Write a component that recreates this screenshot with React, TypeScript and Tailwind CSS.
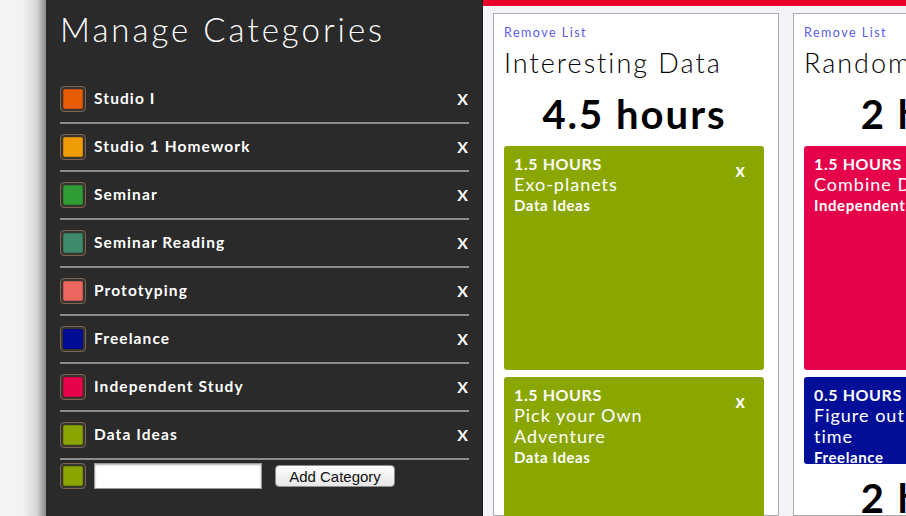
import React from 'react';

interface Category {
  name: string;
  color: string;
}

interface Task {
  hours: string;
  title: React.ReactNode;
  category: string;
  color: string;
  height: string;
  showX?: boolean;
}

const categories: Category[] = [
  { name: 'Studio I', color: 'bg-[#e85c05]' },
  { name: 'Studio 1 Homework', color: 'bg-[#ef9c05]' },
  { name: 'Seminar', color: 'bg-[#2f9c35]' },
  { name: 'Seminar Reading', color: 'bg-[#3d8a6c]' },
  { name: 'Prototyping', color: 'bg-[#ec6660]' },
  { name: 'Freelance', color: 'bg-[#020c94]' },
  { name: 'Independent Study', color: 'bg-[#e5024b]' },
  { name: 'Data Ideas', color: 'bg-[#8aa400]' },
];

const Swatch = ({ color }: { color: string }) => (
  <div className="w-[26px] h-[26px] shrink-0 rounded-[4px] border border-[#7a6550] bg-[#3a3430] p-[2px]">
    <div className={`w-full h-full rounded-[2px] ${color} shadow-[inset_0_0_0_1px_rgba(0,0,0,0.15)]`} />
  </div>
);

const TaskCard = ({ task }: { task: Task }) => (
  <div className={`${task.color} ${task.height} w-[260px] shrink-0 rounded-[3px] overflow-hidden pl-[10px] pt-[7px] pr-[19px] flex gap-[12px] text-white`}>
    <div className="flex-1 min-w-0">
      <p className="text-[16px] font-bold leading-[21px] tracking-[0.6px]">{task.hours}</p>
      <p className="text-[18px] leading-[21px] tracking-[1px]">{task.title}</p>
      <p className="text-[15px] font-bold leading-[21px] tracking-[0.6px]">{task.category}</p>
    </div>
    {task.showX && <span className="text-[18px] font-bold leading-[21px] mt-[7px]">x</span>}
  </div>
);

interface ListProps {
  title: string;
  total: string;
  tasks: Task[];
  footer?: string;
}

const ListCard = ({ title, total, tasks, footer }: ListProps) => (
  <div className="w-[286px] shrink-0 bg-white border border-[#ababab] pl-[10px] pr-[13px] pt-[11px] flex flex-col">
    <a className="text-[12.5px] text-[#5b5ce8] tracking-[1.5px] leading-[16px]">Remove List</a>
    <h2 className="text-[27px] font-light text-black tracking-[2px] leading-[32px] mt-[6px] whitespace-nowrap">{title}</h2>
    <p className="text-[40px] font-bold text-black text-center leading-[44px] mt-[13px] tracking-[2px] whitespace-nowrap">{total}</p>
    <div className="flex flex-col gap-[7px] mt-[10px]">
      {tasks.map((t, i) => (
        <TaskCard key={i} task={t} />
      ))}
    </div>
    {footer && (
      <p className="text-[40px] font-bold text-black text-center leading-[44px] mt-[12px] tracking-[2px] whitespace-nowrap">{footer}</p>
    )}
  </div>
);

export default function App() {
  return (
    <div className="flex w-[906px] h-[516px] overflow-hidden font-['Lato','Noto_Sans',sans-serif]">
      {/* page shadow */}
      <div className="w-[46px] shrink-0 bg-[linear-gradient(to_right,#f3f3f3_50%,#d6d6d6_80%,#8a8a8a)]" />

      {/* Manage Categories */}
      <div className="w-[436px] shrink-0 bg-[#2a2a2a] pl-[14px] pr-[13px] pt-[12px]">
        <h1 className="text-[33px] font-light text-white leading-[34px] tracking-[3px] mb-[30px]">Manage Categories</h1>
        <ul>
          {categories.map((c) => (
            <li key={c.name} className="h-[48px] border-b-2 border-[#8c8c8c] flex items-center gap-[8px] pb-[1px]">
              <Swatch color={c.color} />
              <span className="flex-1 text-[15.5px] font-bold text-white tracking-[1.1px]">{c.name}</span>
              <span className="text-[16px] font-bold text-white mr-[1px]">X</span>
            </li>
          ))}
        </ul>
        <div className="flex items-center mt-[2px] h-[28px]">
          <Swatch color="bg-[#8aa400]" />
          <input className="ml-[8px] w-[168px] h-[26px] bg-white border border-[#9a9a9a] shadow-[inset_0_1px_2px_rgba(0,0,0,0.3)] outline-none" />
          <button className="ml-[13px] w-[120px] h-[22px] rounded-[4px] border border-[#8e8e8e] bg-[linear-gradient(#ffffff,#e6e6e6)] text-[15px] leading-none text-[#111] font-['Liberation_Sans',sans-serif]">
            Add Category
          </button>
        </div>
      </div>

      {/* Lists */}
      <div className="flex-1 min-w-0 flex flex-col bg-[#f4f3f7] border-l border-[#1a1a1a]">
        <div className="h-[6px] shrink-0 bg-[#e8002d]" />
        <div className="flex gap-[14px] pl-[10px] pt-[7px] overflow-hidden">
          <ListCard
            title="Interesting Data"
            total="4.5 hours"
            tasks={[
              { hours: '1.5 HOURS', title: 'Exo-planets', category: 'Data Ideas', color: 'bg-[#8aa600]', height: 'h-[224px]', showX: true },
              { hours: '1.5 HOURS', title: 'Pick your Own Adventure', category: 'Data Ideas', color: 'bg-[#8aa600]', height: 'h-[224px]', showX: true },
            ]}
          />
          <ListCard
            title="Random Thoughts"
            total="2 hours"
            tasks={[
              { hours: '1.5 HOURS', title: 'Combine Datasets', category: 'Independent Study', color: 'bg-[#e6024b]', height: 'h-[224px]', showX: true },
              { hours: '0.5 HOURS', title: <>Figure out schedule<br />time</>, category: 'Freelance', color: 'bg-[#010f98]', height: 'h-[87px]', showX: true },
            ]}
            footer="2 hours"
          />
        </div>
      </div>
    </div>
  );
}
